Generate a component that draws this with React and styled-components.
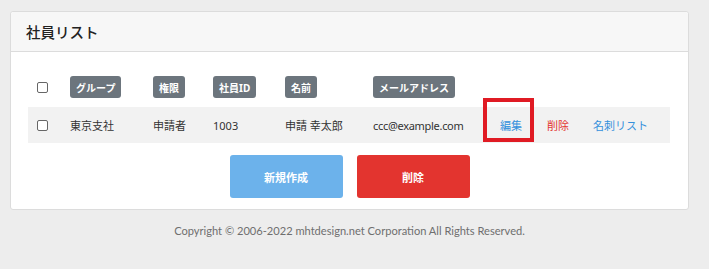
import React from 'react';
import styled, { createGlobalStyle } from 'styled-components';

const GlobalStyle = createGlobalStyle`
  html, body {
    margin: 0;
    padding: 0;
    background: #ededed;
    font-family: 'Noto Sans', 'Noto Sans CJK JP', sans-serif;
    color: #333;
  }
`;

const Page = styled.div`
  width: 709px;
  height: 269px;
  padding: 11px 20px 0 10px;
  box-sizing: border-box;
`;

const Card = styled.div`
  background: #fff;
  border: 1px solid #dcdcdc;
  border-radius: 3px;
`;

const CardHeader = styled.div`
  height: 39px;
  display: flex;
  align-items: center;
  padding: 0 15px;
  background: #f7f7f7;
  border-bottom: 1px solid #dcdcdc;
  border-radius: 3px 3px 0 0;
  font-family: 'Noto Sans CJK JP', sans-serif;
  font-size: 14.5px;
  font-weight: 500;
  color: #222;
`;

const CardBody = styled.div`
  padding: 24px 18px 11px 17px;
`;

const Row = styled.div`
  display: grid;
  grid-template-columns: 42px 83px 60px 72px 88px 110px 1fr;
  align-items: center;
  height: ${p => p.$height}px;
  background: ${p => (p.$striped ? '#f2f2f2' : 'transparent')};
  font-size: 11px;
  margin-bottom: ${p => p.$gap || 0}px;
`;

const Check = styled.span`
  display: block;
  width: 9px;
  height: 9px;
  margin-left: 9px;
  border: 1px solid #666;
  border-radius: 2px;
  background: #fff;
`;

const Badge = styled.span`
  justify-self: start;
  display: inline-flex;
  align-items: center;
  height: 22px;
  padding: 0 6px;
  background: #6c757d;
  color: #fff;
  border-radius: 3px;
  font-size: 10px;
  font-weight: 700;
`;

const Cell = styled.span`
  color: #333;
  letter-spacing: ${p => (p.$latin ? '-0.3px' : '0')};
`;

const Actions = styled.div`
  display: flex;
  align-items: center;
  padding-left: 17px;
`;

const Action = styled.a`
  position: relative;
  color: ${p => (p.$danger ? '#e3342f' : '#3490dc')};
  text-decoration: none;
  margin-right: ${p => p.$space}px;

  ${p => p.$marked && `
    &::after {
      content: '';
      position: absolute;
      left: -17px;
      top: -19px;
      width: 43px;
      height: 36px;
      border: 4px solid #e01b24;
    }
  `}
`;

const Buttons = styled.div`
  display: flex;
  justify-content: center;
  gap: 14px;
  margin-top: 12px;
  margin-left: 1px;
`;

const Button = styled.button`
  width: 113px;
  height: 43px;
  border: none;
  border-radius: 3px;
  background: ${p => p.$bg};
  color: #fff;
  font-family: 'Noto Sans CJK JP', sans-serif;
  font-size: 11px;
  font-weight: 700;
`;

const Footer = styled.div`
  text-align: center;
  padding-top: 14px;
  font-family: Lato, 'Noto Sans', sans-serif;
  font-size: 11.1px;
  color: #6f6f6f;
`;

const headers = ['グループ', '権限', '社員ID', '名前', 'メールアドレス'];
const row = ['東京支社', '申請者', '1003', '申請 幸太郎', 'ccc@example.com'];

export default function App() {
  return (
    <Page>
      <GlobalStyle />
      <Card>
        <CardHeader>社員リスト</CardHeader>
        <CardBody>
          <Row $height={22} $gap={9}>
            <Check />
            {headers.map(h => <span key={h}><Badge>{h}</Badge></span>)}
            <span />
          </Row>
          <Row $height={36} $striped>
            <Check />
            {row.map(c => <Cell key={c} $latin={c.includes('@')}>{c}</Cell>)}
            <Actions>
              <Action href="#" $space={25} $marked>編集</Action>
              <Action href="#" $space={24} $danger>削除</Action>
              <Action href="#">名刺リスト</Action>
            </Actions>
          </Row>
          <Buttons>
            <Button $bg="#6cb2eb">新規作成</Button>
            <Button $bg="#e3342f">削除</Button>
          </Buttons>
        </CardBody>
      </Card>
      <Footer>Copyright © 2006-2022 mhtdesign.net Corporation All Rights Reserved.</Footer>
    </Page>
  );
}
